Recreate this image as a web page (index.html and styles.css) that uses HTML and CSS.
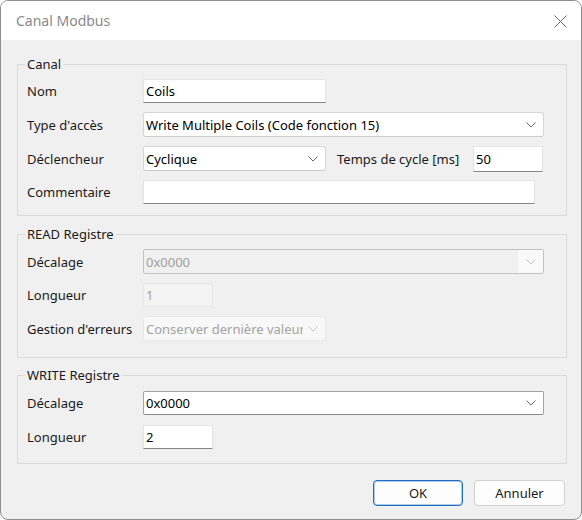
FILE: index.html
```html
<!DOCTYPE html>
<html lang="fr">
<head>
<meta charset="utf-8">
<title>Canal Modbus</title>
<link rel="stylesheet" href="styles.css">
</head>
<body>
<div class="window">
  <div class="titlebar">
    <span class="title">Canal Modbus</span>
    <svg class="close" width="13" height="13" viewBox="0 0 13 13"><path d="M0.5 0.5 L12.5 12.5 M12.5 0.5 L0.5 12.5" stroke="#6b6b6b" stroke-width="1" fill="none"/></svg>
  </div>
  <div class="body">
    <fieldset class="group g-canal">
      <legend>Canal</legend>
      <div class="row r24">
        <span class="lbl">Nom</span>
        <div class="edit w183">Coils</div>
      </div>
      <div class="row r25">
        <span class="lbl">Type d'accès</span>
        <div class="combo w401"><span class="ctext">Write Multiple Coils (Code fonction 15)</span><svg class="chev" width="10" height="6" viewBox="0 0 10 6"><polyline points="0.5,0.5 5,5 9.5,0.5" fill="none" stroke="#6a6a6a" stroke-width="1"/></svg></div>
      </div>
      <div class="row r25">
        <span class="lbl">Déclencheur</span>
        <div class="combo w183"><span class="ctext">Cyclique</span><svg class="chev" width="10" height="6" viewBox="0 0 10 6"><polyline points="0.5,0.5 5,5 9.5,0.5" fill="none" stroke="#6a6a6a" stroke-width="1"/></svg></div>
        <span class="lbl2">Temps de cycle [ms]</span>
        <div class="edit w70 h26">50</div>
      </div>
      <div class="row r24">
        <span class="lbl">Commentaire</span>
        <div class="edit w392"></div>
      </div>
    </fieldset>

    <fieldset class="group g-read">
      <legend>READ Registre</legend>
      <div class="row r25">
        <span class="lbl">Décalage</span>
        <div class="ecombo dis w401"><span class="ctext">0x0000</span><span class="dbtn"><svg class="chev" width="10" height="6" viewBox="0 0 10 6"><polyline points="0.5,0.5 5,5 9.5,0.5" fill="none" stroke="#c2c2c2" stroke-width="1"/></svg></span></div>
      </div>
      <div class="row r24">
        <span class="lbl">Longueur</span>
        <div class="edit dis w70">1</div>
      </div>
      <div class="row r25">
        <span class="lbl">Gestion d'erreurs</span>
        <div class="combo dis w183"><span class="ctext clip">Conserver dernière valeur</span><svg class="chev" width="10" height="6" viewBox="0 0 10 6"><polyline points="0.5,0.5 5,5 9.5,0.5" fill="none" stroke="#c2c2c2" stroke-width="1"/></svg></div>
      </div>
    </fieldset>

    <fieldset class="group g-write">
      <legend>WRITE Registre</legend>
      <div class="row r24">
        <span class="lbl">Décalage</span>
        <div class="ecombo w401"><span class="ctext">0x0000</span><span class="dbtn"><svg class="chev" width="10" height="6" viewBox="0 0 10 6"><polyline points="0.5,0.5 5,5 9.5,0.5" fill="none" stroke="#6a6a6a" stroke-width="1"/></svg></span></div>
      </div>
      <div class="row r24">
        <span class="lbl">Longueur</span>
        <div class="edit w70">2</div>
      </div>
    </fieldset>

    <div class="buttons">
      <button class="btn default">OK</button>
      <button class="btn">Annuler</button>
    </div>
  </div>
</div>
</body>
</html>
```

FILE: styles.css
```css
html, body {
  margin: 0;
  padding: 0;
  background: #ffffff;
}

body {
  font-family: "Noto Sans", "Open Sans", sans-serif;
  font-size: 13px;
  color: #1a1a1a;
}

.window {
  width: 582px;
  height: 520px;
  box-sizing: border-box;
  border: 1px solid #8f8f8f;
  border-radius: 8px;
  overflow: hidden;
  display: flex;
  flex-direction: column;
  background: #f0f0f0;
}

.titlebar {
  height: 39px;
  flex: none;
  background: #ffffff;
  display: flex;
  align-items: center;
  justify-content: space-between;
  padding: 0 14px 0 15px;
}

.title {
  font-size: 14px;
  color: #8a8a8a;
}

.close {
  display: block;
  margin-top: 1px;
}

.body {
  flex: 1;
  padding: 16px 14px 0 16px;
}

.group {
  margin: 0 0 10px 0;
  border: 1px solid #dadada;
  padding: 7px 0 11px 9px;
  min-width: 0;
  display: flex;
  flex-direction: column;
  gap: 9px;
}

.group legend {
  padding: 0 2px;
  margin-left: -2px;
  line-height: 16px;
  color: #1a1a1a;
}

.g-read {
  margin-bottom: 9px;
  padding-bottom: 16px;
}

.g-write {
  padding-top: 8px;
  padding-bottom: 14px;
  gap: 10px;
}

.row {
  display: flex;
  align-items: center;
}

.r24 { height: 24px; }
.r25 { height: 25px; }

.lbl {
  width: 116px;
  flex: none;
  white-space: nowrap;
}

.lbl2 {
  margin-left: 11px;
  width: 136px;
  flex: none;
  white-space: nowrap;
}

.edit,
.combo,
.ecombo {
  box-sizing: border-box;
  flex: none;
  display: flex;
  align-items: center;
  background: #ffffff;
  color: #000000;
  white-space: nowrap;
  overflow: hidden;
}

.edit {
  height: 24px;
  border: 1px solid #e3e3e3;
  border-bottom-color: #858585;
  padding: 0 2px;
}

.edit.h26 {
  height: 26px;
}

.edit.dis {
  height: 24px;
  background: #f3f3f3;
  border: 1px solid #e6e6e6;
  color: #a0a0a0;
}

.combo {
  height: 25px;
  border: 1px solid #d6d6d6;
  border-bottom-color: #cccccc;
  border-radius: 3px;
  padding: 0 0 0 2px;
}

.combo .chev {
  margin-left: auto;
  margin-right: 7px;
  flex: none;
}

.combo.dis {
  background: #f8f8f8;
  border-color: #e8e8e8;
  color: #a3a3a3;
}

.ctext {
  overflow: hidden;
}

.ctext.clip {
  width: 157px;
  flex: none;
}

.ecombo {
  height: 24px;
  border: 1px solid #a3a3a3;
  border-bottom-color: #8a8a8a;
  border-radius: 2px;
  padding: 0 0 0 2px;
}

.ecombo .dbtn {
  margin-left: auto;
  width: 25px;
  height: 100%;
  display: flex;
  align-items: center;
  justify-content: center;
  flex: none;
}

.ecombo.dis {
  height: 25px;
  background: #f0f0f0;
  border-color: #c3c3c3;
  color: #9f9f9f;
}

.ecombo.dis .dbtn {
  background: #f9f9f9;
}

.w70 { width: 70px; }
.w183 { width: 183px; }
.w392 { width: 392px; }
.w401 { width: 401px; }

.buttons {
  display: flex;
  justify-content: flex-end;
  gap: 11px;
  margin-top: 16px;
  padding-right: 2px;
}

.btn {
  box-sizing: border-box;
  height: 26px;
  width: 91px;
  font-family: inherit;
  font-size: 13px;
  color: #1a1a1a;
  background: #fdfdfd;
  border: 1px solid #d2d2d2;
  border-radius: 4px;
  padding: 0;
}

.btn.default {
  width: 90px;
  border-color: #1e6ec6;
  box-shadow: inset 0 0 0 1px rgba(30, 110, 198, 0.35);
}
```
